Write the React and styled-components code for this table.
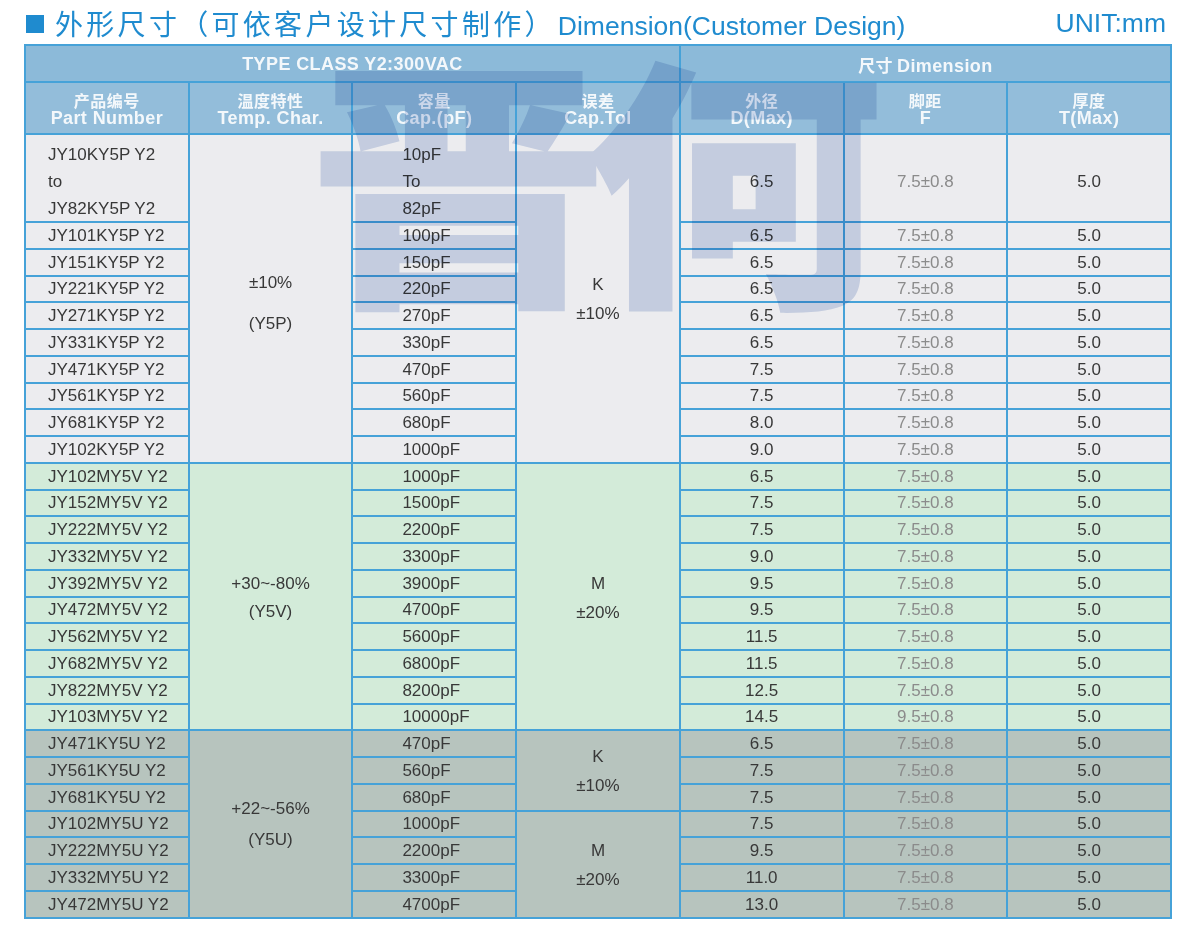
import React from 'react';
import styled, { createGlobalStyle } from 'styled-components';

const GlobalStyle = createGlobalStyle`
  html, body {
    margin: 0;
    padding: 0;
    background: #ffffff;
  }
  body {
    font-family: "Liberation Sans", Arial, "Noto Sans CJK SC", sans-serif;
  }
`;

const Page = styled.div`
  width: 1200px;
  padding: 0 28px 0 24px;
  box-sizing: border-box;
`;

const TitleBar = styled.div`
  display: flex;
  justify-content: space-between;
  align-items: flex-end;
  height: 44px;
  padding-bottom: 5px;
  box-sizing: border-box;
  color: #1f8bcf;
`;

const Title = styled.h1`
  margin: 0;
  display: flex;
  align-items: center;
  font-weight: normal;
  line-height: 1;
`;

const Square = styled.span`
  display: inline-block;
  width: 18px;
  height: 18px;
  margin: 2px 11px 0 2px;
  background: #1f8bcf;
`;

const TitleCn = styled.span`
  font-family: "Noto Sans CJK SC", sans-serif;
  font-size: 28px;
  letter-spacing: 3.3px;
`;

const TitleEn = styled.span`
  font-family: "Liberation Sans", Arial, sans-serif;
  font-size: 26.5px;
  margin-left: 2px;
  margin-top: 5px;
`;

const Unit = styled.span`
  font-family: "Liberation Sans", Arial, sans-serif;
  font-size: 26.5px;
  margin-right: 6px;
`;

const Sheet = styled.div`
  position: relative;
  width: 1148px;
`;

const Table = styled.table`
  width: 100%;
  border-collapse: collapse;
  table-layout: fixed;
  border: 2px solid #46a2d8;
`;

const BandRow = styled.tr`
  height: 37px;
  background: #8cbad9;
`;

const HeadRow = styled.tr`
  height: 52px;
  background: #93bdda;
`;

const BodyRow = styled.tr`
  height: ${(p) => p.$h}px;
`;

const tones = {
  grey: '#ececef',
  green: '#d3ebd9',
  sage: '#b7c4be',
};

const Band = styled.th`
  border: 2px solid #46a2d8;
  color: #f4f8fb;
  font-size: 18px;
  font-weight: bold;
  padding: 2px 0 0;
  text-align: center;
  letter-spacing: 0.4px;
`;

const BandCn = styled.span`
  font-family: "Noto Sans CJK SC", sans-serif;
  font-size: 17px;
  margin-right: 4px;
`;

const Head = styled.th`
  border: 2px solid #46a2d8;
  color: #f4f8fb;
  padding: 2px 0 0;
  text-align: center;
  vertical-align: middle;
  font-weight: bold;
  line-height: 18px;
`;

const HeadCn = styled.div`
  font-family: "Noto Sans CJK SC", sans-serif;
  font-size: 16px;
  letter-spacing: 0.5px;
`;

const HeadEn = styled.div`
  font-size: 18px;
  letter-spacing: 0.4px;
`;

const Cell = styled.td`
  border: 2px solid #46a2d8;
  background: ${(p) => tones[p.$tone]};
  color: ${(p) => (p.$muted ? '#8b8b8b' : '#383838')};
  font-size: 17px;
  padding: ${(p) => p.$lift || 0}px 0 0 ${(p) => p.$indent || 0}px;
  text-align: ${(p) => (p.$indent ? 'left' : 'center')};
  vertical-align: middle;
  line-height: 1;
  white-space: nowrap;
`;

const Stack = styled.div`
  display: flex;
  flex-direction: column;
  align-items: ${(p) => (p.$left ? 'flex-start' : 'center')};
  gap: ${(p) => p.$gap}px;
`;

const Watermark = styled.div`
  position: absolute;
  top: -4px;
  left: 284px;
  font-family: "Noto Sans CJK SC", sans-serif;
  font-weight: 900;
  font-size: 300px;
  line-height: 1;
  letter-spacing: -24px;
  color: #d4ddee;
  mix-blend-mode: multiply;
  pointer-events: none;
  transform: scaleY(0.88);
  transform-origin: top left;
`;

const groups = [
  {
    tone: 'grey',
    temp: ['±10%', '(Y5P)'],
    tempGap: 24,
    tempLift: 10,
    tols: [{ span: 10, lines: ['K', '±10%'] }],
    rows: [
      { part: ['JY10KY5P Y2', 'to', 'JY82KY5P Y2'], cap: ['10pF', 'To', '82pF'], d: '6.5' },
      { part: 'JY101KY5P Y2', cap: '100pF', d: '6.5' },
      { part: 'JY151KY5P Y2', cap: '150pF', d: '6.5' },
      { part: 'JY221KY5P Y2', cap: '220pF', d: '6.5' },
      { part: 'JY271KY5P Y2', cap: '270pF', d: '6.5' },
      { part: 'JY331KY5P Y2', cap: '330pF', d: '6.5' },
      { part: 'JY471KY5P Y2', cap: '470pF', d: '7.5' },
      { part: 'JY561KY5P Y2', cap: '560pF', d: '7.5' },
      { part: 'JY681KY5P Y2', cap: '680pF', d: '8.0' },
      { part: 'JY102KY5P Y2', cap: '1000pF', d: '9.0' },
    ],
  },
  {
    tone: 'green',
    temp: ['+30~-80%', '(Y5V)'],
    tempGap: 11,
    tempLift: 2,
    tols: [{ span: 10, lines: ['M', '±20%'] }],
    rows: [
      { part: 'JY102MY5V Y2', cap: '1000pF', d: '6.5' },
      { part: 'JY152MY5V Y2', cap: '1500pF', d: '7.5' },
      { part: 'JY222MY5V Y2', cap: '2200pF', d: '7.5' },
      { part: 'JY332MY5V Y2', cap: '3300pF', d: '9.0' },
      { part: 'JY392MY5V Y2', cap: '3900pF', d: '9.5' },
      { part: 'JY472MY5V Y2', cap: '4700pF', d: '9.5' },
      { part: 'JY562MY5V Y2', cap: '5600pF', d: '11.5' },
      { part: 'JY682MY5V Y2', cap: '6800pF', d: '11.5' },
      { part: 'JY822MY5V Y2', cap: '8200pF', d: '12.5' },
      { part: 'JY103MY5V Y2', cap: '10000pF', d: '14.5', f: '9.5±0.8' },
    ],
  },
  {
    tone: 'sage',
    temp: ['+22~-56%', '(Y5U)'],
    tempGap: 14,
    tempLift: 0,
    tols: [
      { span: 3, lines: ['K', '±10%'] },
      { span: 4, lines: ['M', '±20%'] },
    ],
    rows: [
      { part: 'JY471KY5U Y2', cap: '470pF', d: '6.5' },
      { part: 'JY561KY5U Y2', cap: '560pF', d: '7.5' },
      { part: 'JY681KY5U Y2', cap: '680pF', d: '7.5' },
      { part: 'JY102MY5U Y2', cap: '1000pF', d: '7.5' },
      { part: 'JY222MY5U Y2', cap: '2200pF', d: '9.5' },
      { part: 'JY332MY5U Y2', cap: '3300pF', d: '11.0' },
      { part: 'JY472MY5U Y2', cap: '4700pF', d: '13.0' },
    ],
  },
];

const Lines = ({ value, gap, left }) =>
  Array.isArray(value) ? (
    <Stack $gap={gap} $left={left}>
      {value.map((line, i) => (
        <span key={i}>{line}</span>
      ))}
    </Stack>
  ) : (
    value
  );

const tolAt = (tols, index) => {
  let start = 0;
  for (const tol of tols) {
    if (index === start) return tol;
    start += tol.span;
  }
  return null;
};

const Body = () =>
  groups.map((group, g) =>
    group.rows.map((row, i) => {
      const tol = tolAt(group.tols, i);
      const tall = Array.isArray(row.part);
      const lift = tall ? 6 : 0;
      return (
        <BodyRow key={`${g}-${i}`} $h={tall ? 88 : 26.75}>
          <Cell $tone={group.tone} $indent={22} $lift={lift}>
            <Lines value={row.part} gap={10} left />
          </Cell>
          {i === 0 && (
            <Cell $tone={group.tone} $lift={group.tempLift} rowSpan={group.rows.length}>
              <Lines value={group.temp} gap={group.tempGap} />
            </Cell>
          )}
          <Cell $tone={group.tone} $indent={49} $lift={lift}>
            <Lines value={row.cap} gap={10} left />
          </Cell>
          {tol && (
            <Cell $tone={group.tone} $lift={2} rowSpan={tol.span}>
              <Lines value={tol.lines} gap={12} />
            </Cell>
          )}
          <Cell $tone={group.tone} $lift={lift}>{row.d}</Cell>
          <Cell $tone={group.tone} $lift={lift} $muted>
            {row.f || '7.5±0.8'}
          </Cell>
          <Cell $tone={group.tone} $lift={lift}>5.0</Cell>
        </BodyRow>
      );
    })
  );

const heads = [
  ['产品编号', 'Part Number'],
  ['温度特性', 'Temp. Char.'],
  ['容量', 'Cap.(pF)'],
  ['误差', 'Cap.Tol'],
  ['外径', 'D(Max)'],
  ['脚距', 'F'],
  ['厚度', 'T(Max)'],
];

const App = () => (
  <Page>
    <GlobalStyle />
    <TitleBar>
      <Title>
        <Square />
        <TitleCn>外形尺寸（可依客户设计尺寸制作）</TitleCn>
        <TitleEn>Dimension(Customer Design)</TitleEn>
      </Title>
      <Unit>UNIT:mm</Unit>
    </TitleBar>
    <Sheet>
      <Table>
        <thead>
          <BandRow>
            <Band colSpan={4}>TYPE CLASS Y2:300VAC</Band>
            <Band colSpan={3}>
              <BandCn>尺寸</BandCn>Dimension
            </Band>
          </BandRow>
          <HeadRow>
            {heads.map(([cn, en]) => (
              <Head key={en}>
                <HeadCn>{cn}</HeadCn>
                <HeadEn>{en}</HeadEn>
              </Head>
            ))}
          </HeadRow>
        </thead>
        <tbody>
          <Body />
        </tbody>
      </Table>
      <Watermark aria-hidden="true">晋何</Watermark>
    </Sheet>
  </Page>
);

export default App;
